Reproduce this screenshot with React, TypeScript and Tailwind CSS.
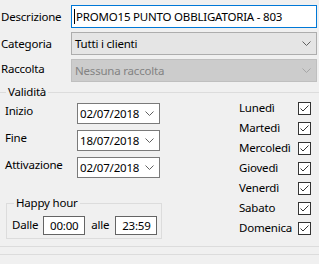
import React from "react";

const font = { fontFamily: '"Noto Sans", "Open Sans", sans-serif' };

function Chevron({ color = "#606060" }: { color?: string }) {
  return (
    <svg width="9" height="5" viewBox="0 0 9 5" className="block shrink-0">
      <polyline points="0.5,0.5 4.5,4.5 8.5,0.5" fill="none" stroke={color} strokeWidth="1" />
    </svg>
  );
}

function DateBox({ value }: { value: string }) {
  return (
    <div className="w-[83px] h-[21px] border border-[#7a7a7a] bg-white flex items-center justify-between pl-[2px] pr-[5px]">
      <span>{value}</span>
      <Chevron />
    </div>
  );
}

function Check() {
  return (
    <div className="w-[13px] h-[13px] shrink-0 border border-[#333333] bg-white flex items-center justify-center">
      <svg width="11" height="11" viewBox="0 0 11 11" className="block">
        <polyline points="1.5,5.5 4,8 9.5,2.5" fill="none" stroke="#333333" strokeWidth="1" />
      </svg>
    </div>
  );
}

const days = ["Lunedì", "Martedì", "Mercoledì", "Giovedì", "Venerdì", "Sabato", "Domenica"];

export default function App() {
  return (
    <div
      className="w-[319px] h-[264px] bg-[#f0f0f0] overflow-hidden text-[11.5px] tracking-[-0.2px] text-black leading-[16px]"
      style={font}
    >
      <div className="pt-[5px] flex flex-col gap-[4px]">
        <div className="flex items-center h-[23px]">
          <span className="w-[71px] pl-[1px]">Descrizione</span>
          <div className="w-[246px] h-[23px] border border-[#0078d7] bg-white flex items-center pl-[2px]">
            <span className="w-px h-[15px] bg-black mr-[1px]" />
            <span>PROMO15 PUNTO OBBLIGATORIA - 803</span>
          </div>
        </div>
        <div className="flex items-center h-[23px]">
          <span className="w-[71px] pl-[1px]">Categoria</span>
          <div className="w-[246px] h-[23px] border border-[#adadad] bg-[#e5e5e5] flex items-center justify-between pl-[3px] pr-[5px]">
            <span>Tutti i clienti</span>
            <Chevron />
          </div>
        </div>
        <div className="flex items-center h-[23px]">
          <span className="w-[71px] pl-[1px] -mt-[4px]">Raccolta</span>
          <div className="w-[246px] h-[23px] border border-[#bfbfbf] bg-[#cccccc] text-[#838383] flex items-center justify-between pl-[3px] pr-[5px]">
            <span>Nessuna raccolta</span>
            <Chevron color="#a6a6a6" />
          </div>
        </div>
      </div>

      <fieldset className="mt-[2px] border-t border-b border-[#dcdcdc] h-[163px]">
        <legend className="ml-[6px] px-[2px]">Validità</legend>
        <div className="flex justify-between">
          <div className="flex flex-col">
            <div className="flex flex-col gap-[6px] mt-[3px]">
              {[
                ["Inizio", "02/07/2018"],
                ["Fine", "18/07/2018"],
                ["Attivazione", "02/07/2018"],
              ].map(([l, v]) => (
                <div key={l} className="flex items-center h-[21px]">
                  <span className="w-[77px] pl-[5px] -mt-[5px]">{l}</span>
                  <DateBox value={v} />
                </div>
              ))}
            </div>
            <fieldset className="ml-[6px] mt-[17px] w-[156px] h-[44px] border border-[#dcdcdc]">
              <legend className="ml-[7px] px-[2px]">Happy hour</legend>
              <div className="flex items-center pl-[5px] mt-[5px]">
                <span className="-mt-[2px]">Dalle</span>
                <div className="ml-[5px] w-[42px] h-[19px] border border-[#646464] bg-white flex items-center justify-center">00:00</div>
                <span className="ml-[6px] -mt-[2px]">alle</span>
                <div className="ml-[6px] w-[42px] h-[19px] border border-[#646464] bg-white flex items-center justify-center">23:59</div>
              </div>
            </fieldset>
          </div>
          <div className="flex flex-col mr-[8px] -mt-[2px]">
            {days.map((d) => (
              <div key={d} className="flex items-center h-[20px]">
                <span className="w-[59px]">{d}</span>
                <Check />
              </div>
            ))}
          </div>
        </div>
      </fieldset>
      <div className="mt-[7px] border-t border-[#dcdcdc]" />
    </div>
  );
}
